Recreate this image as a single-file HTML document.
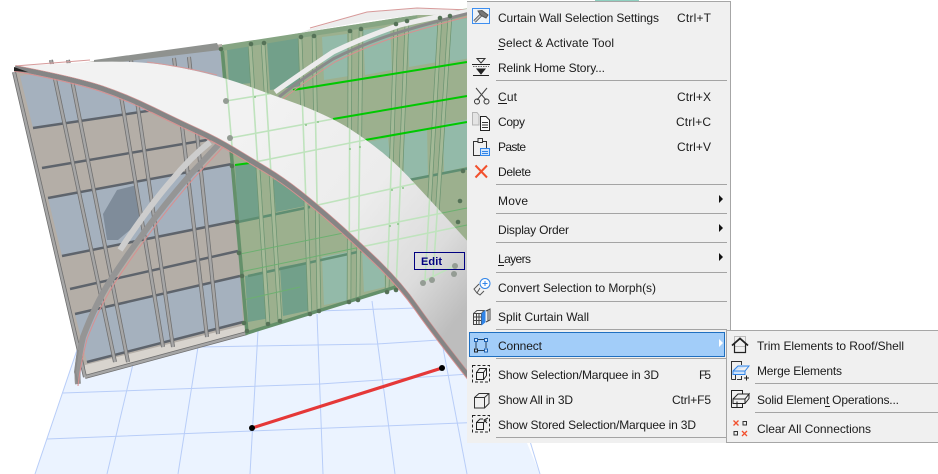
<!DOCTYPE html>
<html><head><meta charset="utf-8"><style>
html,body{margin:0;padding:0;background:#fff;width:938px;height:474px;overflow:hidden}
svg{display:block}
text{font-family:"Liberation Sans",sans-serif;font-size:12px;fill:#1b1b1b}
</style></head><body>
<svg width="938" height="474" viewBox="0 0 938 474" xmlns="http://www.w3.org/2000/svg">
<defs>
<linearGradient id="sh" gradientUnits="userSpaceOnUse" x1="250" y1="110" x2="480" y2="290">
<stop offset="0" stop-color="#f2f2f2"/><stop offset=".5" stop-color="#ececec"/><stop offset=".8" stop-color="#dcdcdc"/><stop offset="1" stop-color="#bdbdbd"/>
</linearGradient>
<path id="lb" d="M15,68 Q77,80 102,88.500 Q127,97 153.500,110 Q180,123 198.500,131.500 Q217,140 233.500,150 Q250,160 266.500,170 Q283,180 300,193.500 Q317,207 334.500,222.500 Q352,238 376,261 Q400,284 416.500,307.500 Q433,331 470,378"/>
<clipPath id="shc"><path d="M90,62 Q147,60 182,68 Q217,75 245,85 Q273,95 303,106 Q333,118 350,129 Q367,140 383,153 Q400,167 416,185 Q433,203 470,244 L470,378 Q433,331 416.500,307.500 Q400,284 376,261 Q352,238 334.500,222.500 Q317,207 300,193.500 Q283,180 266.500,170 Q250,160 233.500,150 Q217,140 198.500,131.500 Q180,123 153.500,110 Q127,97 102,88.500 Z"/></clipPath>
</defs>
<rect width="938" height="474" fill="#fff"/>
<!-- floor -->
<polygon points="77,350 260,320 470,262 527,443 540,474 35,474" fill="#ebf3ff"/>
<g stroke="#b8cdf8" stroke-width="1" fill="none">
<path d="M77,350 L35,474"/><path d="M133,364 L107,474"/><path d="M198,347 L178,474"/><path d="M258,331 L250,474"/><path d="M317,314 L323,474"/><path d="M372,301 L395,474"/><path d="M432,290 L467,474"/><path d="M490,310 L540,474"/>
<path d="M63,393 L320,384 L530,370"/><path d="M47,439 L252,431 L540,420"/><path d="M130,364 L198,347 L377,344 L470,338"/><path d="M317,311 L417,308"/>
</g>
<!-- left wall -->
<polygon points="14,72 222,44 247,333 85,377" fill="#b4aea7"/>
<g fill="#a5b1be">
<polygon points="20,76 224,48 228,99 33,128"/>
<polygon points="48,198 232,164 236,221 62,256"/>
<polygon points="75,314 240,276 243,322 87,362"/>
</g>
<polygon points="103,214 117,190 137,185 142,220 118,240 107,240" fill="#7f8c9a"/>
<polygon points="85,365 245,325 247,333 85,377" fill="#d8d4ce"/>
<g fill="none" stroke="#5e646c" stroke-width="2.500">
<path d="M33,128 L228,99"/><path d="M42,168 L230,136"/><path d="M48,198 L232,164"/><path d="M62,256 L236,221"/><path d="M70,289 L238,251"/><path d="M75,314 L240,276"/><path d="M87,362 L243,322"/>
</g>
<g fill="none" stroke="#707070" stroke-width="4">
<path d="M51,60 L115,362"/><path d="M68,60 L128,362"/><path d="M115,60 L163,347"/><path d="M131,60 L173,347"/><path d="M174,58 L207,337"/><path d="M189,57 L218,334"/>
<path d="M14,72 L85,377"/><path d="M85,377 L247,333"/>
</g>
<g fill="none" stroke="#a6a6a6" stroke-width="2.400">
<path d="M51,60 L115,362"/><path d="M68,60 L128,362"/><path d="M115,60 L163,347"/><path d="M131,60 L173,347"/><path d="M174,58 L207,337"/><path d="M189,57 L218,334"/>
<path d="M14,72 L85,377"/><path d="M85,377 L247,333"/>
</g>
<!-- green wall -->
<polygon points="220,48 300,33 417,15 470,8 470,264 247,333" fill="#9cb08e"/>
<g fill="#72a08a">
<polygon points="227,50 250,45 252,83 229,85"/><polygon points="267,42 300,37 303,86 270,90"/>
<polygon points="235,165 260,161 263,217 238,222"/><polygon points="273,180 307,173 310,205 276,212"/>
<polygon points="245,276 267,272 270,318 248,322"/><polygon points="280,267 308,262 311,310 283,316"/>
</g>
<g fill="#93baa9">
<polygon points="322,37 347,34 349,76 324,80"/><polygon points="363,30 390,27 392,70 365,75"/>
<polygon points="408,27 437,24 438,62 409,67"/><polygon points="450,20 470,18 470,58 450,62"/>
<polygon points="367,142 388,138 390,157 369,160"/><polygon points="403,132 427,128 428,176 404,180"/><polygon points="443,124 470,119 470,166 444,172"/>
<polygon points="322,257 348,252 350,300 324,305"/><polygon points="362,250 383,246 385,287 364,292"/>
</g>
<g fill="none" stroke="#5f8e72" stroke-width="2.500">
<path d="M238,222 L310,207"/><path d="M404,181 L470,168"/><path d="M248,276 L385,246"/>
</g>
<g fill="none" stroke="#6c9472" stroke-width="4.500">
<path d="M250,45 L268,324"/><path d="M263,43 L280,321"/><path d="M300,37 L310,314"/><path d="M314,35 L319,311"/><path d="M350,30 L349,302"/><path d="M361,29 L358,300"/><path d="M396,23 L387,292"/><path d="M407,22 L396,290"/><path d="M440,18 L425,280"/><path d="M450,16 L433,277"/>
</g>
<g fill="none" stroke="#a4b997" stroke-width="3">
<path d="M250,45 L268,324"/><path d="M263,43 L280,321"/><path d="M300,37 L310,314"/><path d="M314,35 L319,311"/><path d="M350,30 L349,302"/><path d="M361,29 L358,300"/><path d="M396,23 L387,292"/><path d="M407,22 L396,290"/><path d="M440,18 L425,280"/><path d="M450,16 L433,277"/>
</g>
<g fill="none" stroke="#6cb070" stroke-width="1">
<path d="M240,254 L467,208"/><path d="M240,272 L390,241 L467,225"/><path d="M243,300 L300,287"/>
</g>
<path d="M222,47 L247,333 L470,264" fill="none" stroke="#64906a" stroke-width="3.500"/>
<g fill="none" stroke="#00c800" stroke-width="2">
<path d="M293,90 L467,62"/><path d="M333,119 L467,96"/><path d="M365,140 L467,122"/><path d="M235,165 L250,163"/>
</g>
<!-- top band & far shell -->
<polygon points="94,60 217,43 220,50 94,65" fill="#8f928f"/>
<polygon points="222,45 300,33 417,15 418,20 300,38 222,51" fill="#86a583"/>
<polygon points="310,29 367,12 417,8 470,11 470,14 430,15 418,15 367,21 300,33" fill="#ededed"/>
<path d="M310,28 L367,12 L417,8 L470,10" fill="none" stroke="#d79a9a" stroke-width="1"/>
<!-- second arch upper -->
<path d="M275,92 Q300,74 333,52 Q367,36 400,25 Q433,17 470,11" fill="none" stroke="#ececec" stroke-width="5"/>
<path d="M279,97 Q300,80 333,59 Q367,42 400,32 Q433,22 470,13" fill="none" stroke="#8a8a8a" stroke-width="3"/>
<path d="M283,99 Q303,83 335,62 Q369,45 402,35 Q435,25 470,16" fill="none" stroke="#d98f8f" stroke-width="1"/>
<!-- second arch lower -->
<path d="M120,250 Q150,205 172,180 Q190,158 210,142" fill="none" stroke="#cdcdcd" stroke-width="6"/>
<path d="M78,384 Q76,367 83,337 Q95,305 110,281 Q125,258 140,238 Q152,221 165,205 Q177,190 190,175 Q204,160 220,143" fill="none" stroke="#959595" stroke-width="6"/>
<path d="M78,384 L75,372 L78,350" fill="none" stroke="#8a8a8a" stroke-width="2"/>
<path d="M78,386 Q80,367 87,339 Q99,308 114,284 Q129,261 144,241 Q156,224 169,208 Q181,193 194,178 Q208,163 224,146" fill="none" stroke="#d98f8f" stroke-width="1"/>
<!-- main shell -->
<path d="M15,66 L90,62 Q147,60 182,68 Q217,75 245,85 Q273,95 303,106 Q333,118 350,129 Q367,140 383,153 Q400,167 416,185 Q433,203 470,244 L470,378 Q433,331 416.500,307.500 Q400,284 376,261 Q352,238 334.500,222.500 Q317,207 300,193.500 Q283,180 266.500,170 Q250,160 233.500,150 Q217,140 198.500,131.500 Q180,123 153.500,110 Q127,97 102,88.500 Q77,80 15,68 Z" fill="url(#sh)"/>
<path d="M15,66 L90,60" stroke="#d79a9a" fill="none" stroke-width="1"/>
<path d="M147,62 Q185,67 217,75" stroke="#d79a9a" fill="none" stroke-width="1"/>
<g clip-path="url(#shc)" fill="none" stroke="#bfe3bd" stroke-width="1.600">
<path d="M226,76 L240,240"/>
<path d="M250,45 L268,324"/><path d="M263,43 L280,321"/><path d="M300,37 L310,314"/><path d="M314,35 L319,311"/><path d="M350,30 L349,302"/><path d="M361,29 L358,300"/><path d="M396,23 L387,292"/><path d="M407,22 L396,290"/><path d="M440,18 L425,280"/><path d="M450,16 L433,277"/>
<path d="M226,101 L293,90"/><path d="M230,138 L333,119"/><path d="M250,163 L365,140"/><path d="M250,220 L467,172"/><path d="M240,254 L467,208"/><path d="M240,272 L467,225"/><path d="M420,283 L456,265"/>
</g>
<g clip-path="url(#shc)" fill="#8cc58a"><circle cx="255" cy="97" r="1"/><circle cx="268" cy="93" r="1"/><circle cx="306" cy="125" r="1"/><circle cx="318" cy="122" r="1"/><circle cx="350" cy="149" r="1"/><circle cx="360" cy="147" r="1"/><circle cx="392" cy="190" r="1"/><circle cx="403" cy="188" r="1"/><circle cx="390" cy="226" r="1"/><circle cx="398" cy="224" r="1"/></g>
<use href="#lb" fill="none" stroke="#858585" stroke-width="5"/>
<use href="#lb" transform="translate(-1,3)" fill="none" stroke="#d98f8f" stroke-width="1"/>
<use href="#lb" transform="translate(1,-2.500)" fill="none" stroke="#d98f8f" stroke-width=".6"/>
<path d="M14,67 L28,72 L14,71 Z" fill="#222"/>
<!-- nodes -->
<g fill="#557257">
<circle cx="221" cy="49" r="2.300"/><circle cx="251" cy="44" r="2.300"/><circle cx="264" cy="43" r="2.300"/><circle cx="301" cy="37" r="2.300"/><circle cx="314" cy="36" r="2.300"/><circle cx="350" cy="31" r="2.300"/><circle cx="361" cy="29" r="2.300"/><circle cx="396" cy="24" r="2.300"/><circle cx="407" cy="21" r="2.300"/><circle cx="440" cy="18" r="2.300"/><circle cx="450" cy="16" r="2.300"/>
<circle cx="232" cy="166" r="2.300"/><circle cx="237" cy="222" r="2.300"/><circle cx="239" cy="253" r="2.300"/><circle cx="242" cy="276" r="2.300"/><circle cx="244" cy="323" r="2.300"/><circle cx="247" cy="331" r="2.300"/><circle cx="268" cy="324" r="2.300"/><circle cx="280" cy="321" r="2.300"/><circle cx="310" cy="314" r="2.300"/><circle cx="319" cy="311" r="2.300"/><circle cx="349" cy="302" r="2.300"/><circle cx="358" cy="300" r="2.300"/><circle cx="387" cy="292" r="2.300"/><circle cx="396" cy="290" r="2.300"/><circle cx="463" cy="171" r="2.300"/><circle cx="460" cy="201" r="2.300"/><circle cx="458" cy="222" r="2.300"/>
</g>
<g fill="#949c94"><circle cx="226" cy="101" r="3"/><circle cx="230" cy="138" r="3"/><circle cx="455" cy="266" r="3"/><circle cx="454" cy="274" r="3"/><circle cx="432" cy="280" r="3"/><circle cx="423" cy="283" r="3"/></g>
<!-- red line -->
<path d="M252,428 L442,368" stroke="#e53838" stroke-width="3.200"/>
<circle cx="252" cy="428" r="3" fill="#000"/><circle cx="442" cy="368" r="3" fill="#000"/>
<!-- edit -->
<rect x="414.500" y="252.500" width="50" height="17" fill="none" stroke="#000080" stroke-width="1"/>
<text x="421" y="265" style="font-weight:bold;font-size:11px;fill:#000080" textLength="21">Edit</text>

<!-- main menu -->
<rect x="467" y="1" width="263.500" height="442" fill="#f0f0f0"/>
<path d="M467,1.500 H730.500 V331" fill="none" stroke="#a6a6a6"/>
<rect x="595" y="0" width="44" height="1" fill="#8fd0c0"/>
<g fill="#a4a4a4">
<rect x="496" y="80" width="231" height="1"/><rect x="496" y="184" width="231" height="1"/><rect x="496" y="213" width="231" height="1"/><rect x="496" y="242" width="231" height="1"/><rect x="496" y="272" width="231" height="1"/><rect x="496" y="301" width="231" height="1"/><rect x="496" y="329" width="231" height="1"/><rect x="496" y="358" width="231" height="1"/><rect x="496" y="437" width="231" height="1"/>
</g>
<rect x="469.500" y="332.500" width="255" height="24" fill="#a2cdf9" stroke="#1f6fc0"/>
<g>
<text x="498" y="22" textLength="161">Curtain Wall Selection Settings</text><text x="677" y="22" textLength="34">Ctrl+T</text>
<text x="498" y="47" textLength="116">Select &amp; Activate Tool</text>
<text x="498" y="72" textLength="107">Relink Home Story...</text>
<text x="498" y="101" textLength="19">Cut</text><text x="677" y="101" textLength="34">Ctrl+X</text>
<text x="498" y="126" textLength="27">Copy</text><text x="676" y="126" textLength="35">Ctrl+C</text>
<text x="498" y="151" textLength="28">Paste</text><text x="677" y="151" textLength="34">Ctrl+V</text>
<text x="498" y="176" textLength="33">Delete</text>
<text x="498" y="205" textLength="30">Move</text>
<text x="498" y="234" textLength="71">Display Order</text>
<text x="498" y="263" textLength="33">Layers</text>
<text x="498" y="292" textLength="158">Convert Selection to Morph(s)</text>
<text x="498" y="321" textLength="91">Split Curtain Wall</text>
<text x="498" y="350" textLength="44">Connect</text>
<text x="498" y="379" textLength="161">Show Selection/Marquee in 3D</text><text x="699" y="379" textLength="12">F5</text>
<text x="498" y="404" textLength="75">Show All in 3D</text><text x="672" y="404" textLength="39">Ctrl+F5</text>
<text x="498" y="429" textLength="198">Show Stored Selection/Marquee in 3D</text>
</g>
<g fill="#1b1b1b"><rect x="498" y="49" width="6" height="1"/><rect x="498" y="103" width="9" height="1"/><rect x="498" y="265" width="6" height="1"/></g>
<g fill="#111"><polygon points="719,195 723,199 719,203"/><polygon points="719,224 723,228 719,232"/><polygon points="719,253 723,257 719,261"/></g>
<polygon points="719,339 723,343 719,347" fill="#fff"/>

<!-- submenu -->
<rect x="726.500" y="330.500" width="212" height="112" fill="#f0f0f0" stroke="#a6a6a6"/>
<g fill="#a4a4a4"><rect x="755" y="383" width="183" height="1"/><rect x="755" y="412" width="183" height="1"/></g>
<text x="757" y="350" textLength="147">Trim Elements to Roof/Shell</text>
<text x="757" y="375" textLength="85">Merge Elements</text>
<text x="757" y="404" textLength="142">Solid Element Operations...</text>
<text x="757" y="433" textLength="114">Clear All Connections</text>
<rect x="825" y="406" width="5" height="1" fill="#1b1b1b"/>

<!-- icons main -->
<g fill="none" stroke-width="1">
<rect x="472.500" y="8.500" width="17" height="15" stroke="#3d8ef0" fill="#eef3f8"/>
<path d="M474.500,21.500 L482,14" stroke="#555" stroke-width="3.200"/><path d="M474.500,21.500 L482,14" stroke="#d4d4d4" stroke-width="1.400"/>
<path d="M478,11 L482,10.500 L488,15 L486,18 L481,15.500 Z" fill="#777" stroke="#555"/>
<!-- relink -->
<path d="M472,64.500 H490 M473,75.500 H489" stroke="#222"/><path d="M477,58.500 H485 L481,63 Z" stroke="#333"/><path d="M473,66.500 H489" stroke="#666" stroke-dasharray="1.500 1"/><path d="M477,69 H485 L481,74 Z" fill="#222" stroke="#222"/>
<!-- scissors -->
<path d="M476,88 L486,100 M487,88 L477,100" stroke="#444"/><circle cx="477" cy="101.500" r="2.500" stroke="#333"/><circle cx="486.500" cy="101.500" r="2.500" stroke="#333"/>
<!-- copy -->
<path d="M472.500,112.500 H477 L479,115 V125 H472.500 Z" stroke="#b5b5b5" fill="#e4e4e4"/>
<path d="M480.500,116.500 H486 L489.500,120 V130.500 H480.500 Z" stroke="#222" fill="#fafafa"/>
<path d="M482,122.500 H488 M482,125 H488 M482,127.500 H488" stroke="#333"/>
<!-- paste -->
<path d="M478,141.500 H473.500 V155.500 H483 M486.500,148 V141.500 H482" stroke="#333"/><rect x="478" y="138.500" width="4.500" height="4" stroke="#333"/>
<rect x="480.500" y="148.500" width="9" height="7" stroke="#2f84e8" fill="#cfe3fb"/><path d="M482,151.500 H488 M482,153.500 H488" stroke="#2f84e8"/>
<!-- delete -->
<path d="M475.500,165.500 L487,177.500 M487,165.500 L475.500,177.500" stroke="#f2502d" stroke-width="2"/>
<!-- convert -->
<circle cx="485" cy="283.500" r="5" stroke="#2f84e8" fill="#fbfdff"/><path d="M485,281 V286 M482.500,283.500 H487.500" stroke="#2f84e8"/>
<path d="M479,284 L474,289 L477,293 L480,295 L484,291 M477,293 L480,288" stroke="#555"/>
<!-- split -->
<path d="M473.500,313.500 H481.500 V324.500 H473.500 Z M473.500,317 H481.500 M473.500,320.500 H481.500 M476.500,313.500 V324.500 M479,313.500 V324.500" stroke="#444"/>
<path d="M473.500,313.500 L477,310.500 H484 L481.500,313.500" stroke="#555"/>
<path d="M482,313.500 L485,311 V322 L482,324.500 Z" fill="#2f84e8" stroke="#2f84e8"/><path d="M486,311 L490,309 V320 L486,322 M488,310 V321" stroke="#444"/>
<!-- connect -->
<path d="M476,341 V348 M478,339.500 H484 M478,350.500 H484 M486,341 V348" stroke="#2a3f55"/>
<rect x="474.500" y="338.500" width="3" height="3" stroke="#1a5fb0" fill="#d8e8fb"/><rect x="484.500" y="338.500" width="3" height="3" stroke="#1a5fb0" fill="#d8e8fb"/><rect x="474.500" y="349" width="3" height="3" stroke="#222"/><rect x="484.500" y="349" width="3" height="3" stroke="#1a5fb0" fill="#d8e8fb"/>
<!-- show sel -->
<rect x="472.500" y="365.500" width="17" height="16.500" stroke="#222" stroke-dasharray="3 2"/>
<path d="M476.500,372.500 H483.500 V379.500 H476.500 Z M476.500,372.500 L479.500,368.500 H486.500 V375.500 L483.500,379.500 M483.500,372.500 L486.500,368.500" stroke="#222"/>
<!-- show all -->
<path d="M474.500,397.500 H484.500 V408 H474.500 Z M474.500,397.500 L479,393.500 H489 V403.500 L484.500,408 M484.500,397.500 L489,393.500" stroke="#333"/>
<!-- show stored -->
<rect x="472.500" y="415.500" width="17" height="16.500" stroke="#222" stroke-dasharray="3 2"/>
<path d="M476.500,422.500 H483.500 V429.500 H476.500 Z M476.500,422.500 L480,419 H483 M483.500,422.500 L486.500,420" stroke="#222"/><path d="M488,418 L484,420 L487,423" stroke="#222"/>
<!-- trim -->
<rect x="734.500" y="336.500" width="11" height="10" stroke="#bbb"/>
<path d="M732,345.500 L740,338.500 L748,345.500" stroke="#222" stroke-width="1.800"/><path d="M734.500,344 V352.500 H745.500 V344" stroke="#222" stroke-width="1.200"/>
<!-- merge -->
<path d="M731.500,379.500 V361.500 H741.500 V365 M731.500,379.500 H735.500 V372 M741.500,376 V379.500 H737" stroke="#333"/>
<path d="M733,371 L738,366 H749 L745,371 V374.500 H733 Z M733,371 H745 L749,366" stroke="#2f84e8" fill="#cfe3fb"/>
<path d="M744,378 H749 M746.500,375.500 V380.500" stroke="#222"/>
<!-- solid -->
<path d="M731.500,407.500 V390.500 H742.500 V394 M731.500,407.500 H737 V401.500 M742.500,404 V407.500 H737" stroke="#222"/>
<path d="M733,399 L738,394 H749 L745,399 V403.500 H733 Z M733,399 H745 L749,394 V398.500 L745,403.500" stroke="#222"/>
<!-- clear -->
<path d="M733.500,420.500 L738.500,425.500 M738.500,420.500 L733.500,425.500 M742,431 L747,436 M747,431 L742,436" stroke="#f2502d" stroke-width="1.300"/>
<rect x="743" y="421.500" width="3.500" height="3.500" stroke="#333"/><rect x="734" y="431.500" width="3.500" height="3.500" stroke="#333"/>
</g>
</svg>
</body></html>
